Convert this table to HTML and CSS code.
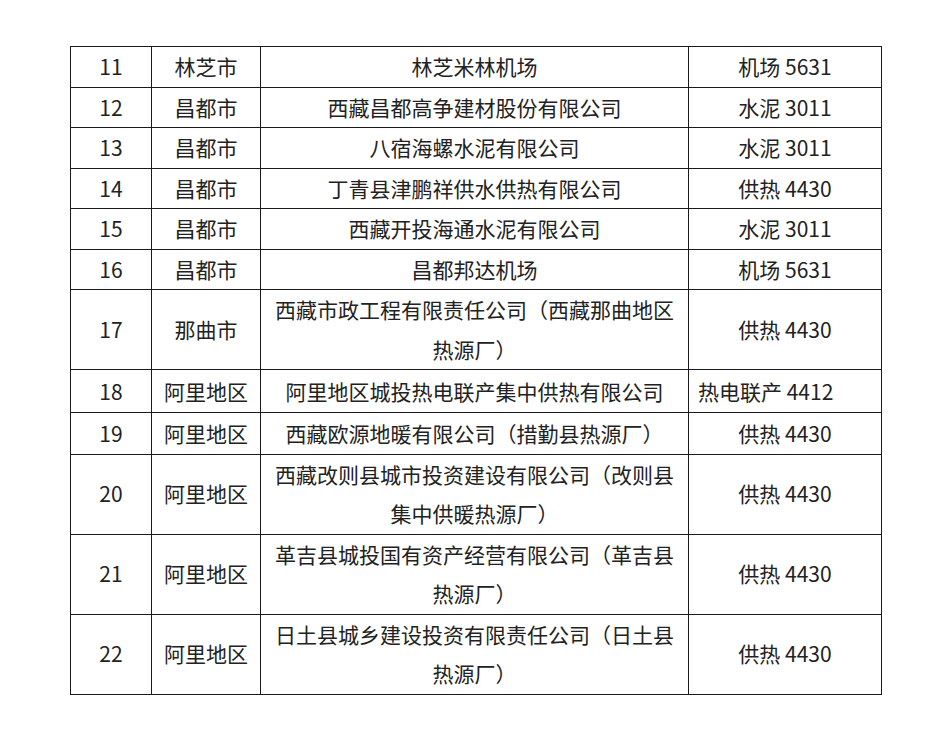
FILE: index.html
```html
<!DOCTYPE html>
<html lang="zh-CN">
<head>
<meta charset="utf-8">
<title>表格</title>
<link rel="stylesheet" href="styles.css">
</head>
<body>
<div class="page">
<table class="grid">
<colgroup>
<col class="c1"><col class="c2"><col class="c3"><col class="c4">
</colgroup>
<tbody>
<tr><td>11</td><td>林芝市</td><td>林芝米林机场</td><td>机场 5631</td></tr>
<tr><td>12</td><td>昌都市</td><td>西藏昌都高争建材股份有限公司</td><td>水泥 3011</td></tr>
<tr><td>13</td><td>昌都市</td><td>八宿海螺水泥有限公司</td><td>水泥 3011</td></tr>
<tr><td>14</td><td>昌都市</td><td>丁青县津鹏祥供水供热有限公司</td><td>供热 4430</td></tr>
<tr><td>15</td><td>昌都市</td><td>西藏开投海通水泥有限公司</td><td>水泥 3011</td></tr>
<tr><td>16</td><td>昌都市</td><td>昌都邦达机场</td><td>机场 5631</td></tr>
<tr><td>17</td><td>那曲市</td><td>西藏市政工程有限责任公司（西藏那曲地区热源厂）</td><td>供热 4430</td></tr>
<tr class="r18"><td>18</td><td>阿里地区</td><td>阿里地区城投热电联产集中供热有限公司</td><td class="left">热电联产 4412</td></tr>
<tr class="r19"><td>19</td><td>阿里地区</td><td>西藏欧源地暖有限公司（措勤县热源厂）</td><td>供热 4430</td></tr>
<tr><td>20</td><td>阿里地区</td><td>西藏改则县城市投资建设有限公司（改则县集中供暖热源厂）</td><td>供热 4430</td></tr>
<tr><td>21</td><td>阿里地区</td><td>革吉县城投国有资产经营有限公司（革吉县热源厂）</td><td>供热 4430</td></tr>
<tr><td>22</td><td>阿里地区</td><td>日土县城乡建设投资有限责任公司（日土县热源厂）</td><td>供热 4430</td></tr>
</tbody>
</table>
</div>
</body>
</html>
```

FILE: styles.css
```css
html, body {
  margin: 0;
  padding: 0;
  background: #ffffff;
}
.page {
  padding: 46px 0 0 70px;
}
.grid {
  border-collapse: collapse;
  table-layout: fixed;
  width: 811px;
  font-family: "Noto Sans CJK SC", "Noto Sans", sans-serif;
  font-size: 21px;
  color: #222222;
}
.c1 { width: 81px; }
.c2 { width: 109px; }
.c3 { width: 428px; }
.c4 { width: 193px; }
.grid td {
  border: 1px solid #1a1a1a;
  text-align: center;
  vertical-align: middle;
  padding: 0 7px;
  line-height: 39.5px;
  word-break: break-all;
}
.grid tr.r18 td {
  line-height: 42px;
}
.grid tr.r19 td {
  line-height: 40.5px;
}
.grid td.left {
  text-align: left;
  padding-left: 9px;
}
```
